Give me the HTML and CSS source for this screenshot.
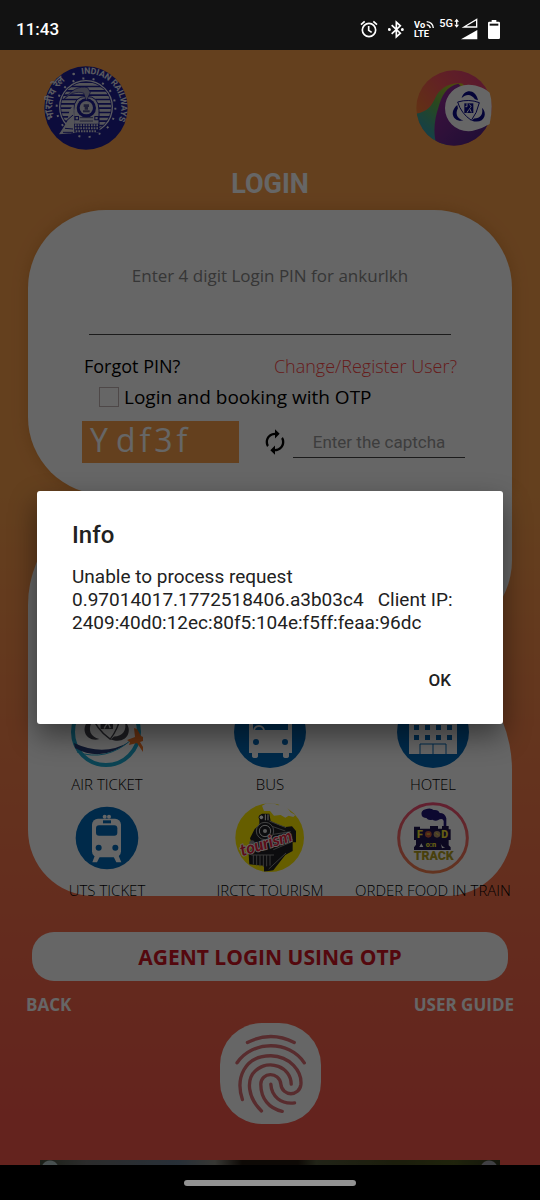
FILE: index.html
```
<!DOCTYPE html>
<html lang="en">
	<head>
		<meta charset="UTF-8">
		<meta name="viewport" content="width=device-width, initial-scale=1">
		<title>Login</title>
		<link rel="stylesheet" href="styles.css">
	</head>
	<body>
		<div class="status-bar">
			<span class="clock">11:43</span>
			<div class="status-icons">
				<!-- alarm -->
				<svg class="alarm" viewBox="0 0 54 54" fill="none" stroke="#fff" stroke-width="5">
					<circle cx="27" cy="30" r="20"/>
					<path d="M26 18v13l9 6M3 14L14 4M51 14L40 4"/>
				</svg>
				<!-- bluetooth -->
				<svg class="bluetooth" viewBox="0 0 48 56" fill="none" stroke="#fff" stroke-width="5">
					<path d="M11 15l26 24-12 11V6l12 11-26 24"/>
					<circle cx="4" cy="28" r="2" fill="#fff"/>
					<circle cx="43" cy="28" r="2" fill="#fff"/>
				</svg>
				<!-- VoLTE -->
				<svg class="volte" viewBox="0 0 60 54">
					<text x="0" y="23" class="volte-text">Vo</text>
					<text x="0" y="52" class="volte-text">LTE</text>
					<path d="M38 5c12 1 19 9 20 19M38 14c6 1 10 5 11 10" fill="none" stroke="#fff" stroke-width="4"/>
				</svg>
				<!-- 5G and signal -->
				<span class="net">5G</span>
				<svg class="signal" viewBox="45 0 72 66">
					<path d="M53 2l7 9H46zM53 29l7-9H46zM51 9h4v12h-4z" fill="#fff"/>
					<path d="M75 27L113 4v23z" fill="none" stroke="#fff" stroke-width="4"/>
					<path d="M66 64L115 36v28z" fill="#fff"/>
				</svg>
				<!-- battery -->
				<svg class="battery" viewBox="0 0 36 57">
					<path d="M11 0h14v5h7q4 0 4 4v44q0 4-4 4H4q-4 0-4-4V9q0-4 4-4h7z" fill="#fff"/>
					<path d="M5 11h26v6H5z" fill="#121212"/>
				</svg>
			</div>
		</div>

		<main class="screen">
			<header class="logos">
				<svg class="logo-ir" viewBox="133 197 252 252" role="img" aria-label="Indian Railways">
					<defs>
						<path id="ringEn" d="M246 222A101 101 0 0 1 336 392"/>
						<path id="ringHi" d="M163 355A102 102 0 0 1 210 232"/>
						<clipPath id="disc"><circle cx="259" cy="320" r="75"/></clipPath>
					</defs>
					<circle cx="259" cy="323" r="125" fill="#1e1e96"/>
					<text class="ring-text"><textPath href="#ringEn">INDIAN RAILWAYS</textPath></text>
					<text class="ring-text ring-hi"><textPath href="#ringHi">भारतीय रेल</textPath></text>
					<circle cx="222" cy="221" r="4" fill="#e6e6f0"/>
					<circle cx="259" cy="322" r="88" fill="none" stroke="#e6e6f0" stroke-width="6" stroke-dasharray="6 25"/>
					<circle cx="259" cy="320" r="79" fill="none" stroke="#e6e6f0" stroke-width="4"/>
					<path clip-path="url(#disc)" d="M180 252h160M180 265h160M180 278h160M180 291h160M180 304h160M180 317h160M180 330h160M180 343h160M180 356h160M180 369h160M180 382h160" stroke="#d2d2dc" stroke-width="8"/>
					<path d="M222 398V330q0-42 38-42t38 42v68z" fill="#d2d2dc" stroke="#1e1e96" stroke-width="3"/>
					<circle cx="260" cy="323" r="29" fill="#1e1e96"/>
					<circle cx="260" cy="322" r="20" fill="#d2d2dc"/>
					<path d="M252 312h16v8h-16zM255 320h10v8h-10zM250 330h20v6h-20z" fill="#50508c"/>
					<path d="M224 347h14v13h-14zM284 347h14v13h-14z" fill="#1e1e96"/>
					<path d="M228 350h7v7h-7zM287 350h7v7h-7z" fill="#d2d2dc"/>
					<path d="M240 352h40M240 362h40" stroke="#50508c" stroke-width="3"/>
					<path d="M222 370h76v24l-38 12-38-12z" fill="#1e1e96"/>
					<path d="M226 375h70M226 384h70M228 393h64" stroke="#d2d2dc" stroke-width="6" stroke-dasharray="5 3"/>
					<path d="M178 402l24-38 8-36 12-14 2 84z" fill="#d2d2dc"/>
					<path d="M202 360l18-16M196 384l24 2M190 396h30" stroke="#1e1e96" stroke-width="3"/>
					<path d="M192 298c22-30 46-42 72-36l8 14-12 26-8-24c-22-6-42 2-60 20z" fill="#a0a0be" stroke="#1e1e96" stroke-width="2"/>
				</svg>
				<svg class="logo-irctc" viewBox="438 209 228 228" role="img" aria-label="IRCTC">
					<defs>
						<linearGradient id="warm" x1="0" y1=".6" x2=".8" y2="0">
							<stop offset="0" stop-color="#f5822d"/><stop offset=".5" stop-color="#f5555a"/><stop offset="1" stop-color="#dc3c78"/>
						</linearGradient>
						<linearGradient id="cool" x1=".8" y1="0" x2=".1" y2="1">
							<stop offset="0" stop-color="#c8be1e"/><stop offset=".4" stop-color="#64b450"/><stop offset="1" stop-color="#1e96e6"/>
						</linearGradient>
						<linearGradient id="violet" x1="0" y1="0" x2="1" y2="1">
							<stop offset="0" stop-color="#a02d9b"/><stop offset="1" stop-color="#412382"/>
						</linearGradient>
						<clipPath id="ball"><circle cx="552" cy="323" r="113"/></clipPath>
						<!-- three blades round the monogram -->
						<g id="wheel">
							<path id="blade" d="M-22-32C-16-58 20-62 27-25L18-28C8-44-8-46-22-32z"/>
							<use href="#blade" transform="rotate(120)"/>
							<use href="#blade" transform="rotate(240)"/>
							<path d="M-34-20Q0-30 31-18Q24 14 7 35Q-24 14-34-20z" fill="none" stroke="currentColor" stroke-width="3"/>
							<path d="M-14-16h27v29h-27z"/>
							<path d="M-6-16v10h-5M1-12q10 4 1 11l5 12M-6 12q3-8 7-10" fill="none" stroke="#fff" stroke-width="3"/>
						</g>
					</defs>
					<g clip-path="url(#ball)">
						<path d="M430 200h250v250H430z" fill="url(#warm)"/>
						<path d="M438 340c38-8 46-24 58-48 12-26 42-48 82-42l20 30-70 170h-90z" fill="url(#cool)"/>
						<path d="M565 250c-36 8-50 36-60 72-12 34-18 84-2 120h170v-90z" fill="url(#violet)"/>
					</g>
					<path d="M595 253c30 0 54 14 64 24q12 36 0 94c-8 4-34 20-64 22a70 70 0 1 1 0-140z" fill="#fff"/>
					<use href="#wheel" x="597" y="325" fill="#0a0a8c" color="#0a0a8c"/>
				</svg>
			</header>
			<h1 class="title">LOGIN</h1>

			<form class="panel panel-login">
				<div class="pin">
					<label for="pin">Enter 4 digit Login PIN for ankurlkh</label>
					<input id="pin" type="password" maxlength="4">
				</div>
				<div class="links">
					<a href="#" class="forgot">Forgot PIN?</a>
					<a href="#" class="change">Change/Register User?</a>
				</div>
				<div class="otp">
					<input type="checkbox" id="otp">
					<label for="otp">Login and booking with OTP</label>
				</div>
				<div class="captcha">
					<div class="captcha-code"><span>Y</span><span>d</span><span>f</span><span>3</span><span>f</span></div>
					<button type="button" class="refresh" aria-label="Refresh captcha">
						<svg viewBox="0 0 24 24"><path d="M12 6v3l4-4-4-4v3c-4.420 0-8 3.580-8 8 0 1.570.46 3.030 1.240 4.260L6.700 14.800C6.250 13.970 6 13.010 6 12c0-3.310 2.690-6 6-6zm6.760 1.740L17.300 9.200c.44.84.7 1.790.7 2.800 0 3.310-2.690 6-6 6v-3l-4 4 4 4v-3c4.420 0 8-3.580 8-8 0-1.570-.46-3.030-1.240-4.260z"/></svg>
					</button>
					<input type="text" class="captcha-input" placeholder="Enter the captcha" aria-label="Captcha">
				</div>
			</form>

			<div class="panel panel-middle"></div>

			<nav class="panel panel-services">
				<a href="#" class="service">
					<svg viewBox="0 0 72 72">
						<circle cx="35" cy="36" r="33" fill="none" stroke="#1eaad2" stroke-width="4"/>
						<use href="#wheel" transform="translate(36 27) scale(.46)" fill="#464650" color="#464650"/>
						<path d="M4 52Q31 67 58 46Q33 61 3 47z" fill="#283c78"/>
						<path d="M6 56Q35 66 60 44" fill="none" stroke="#1eaad2" stroke-width="1"/>
						<path d="M56 44l8-3-1-9 3 1 4 7 2 1v4l-3 1 3 5v5l-6-9-8 2 1-3z" fill="#fa7828"/>
					</svg>
					<span>AIR TICKET</span>
				</a>
				<a href="#" class="service">
					<svg viewBox="0 0 72 72">
						<circle cx="36" cy="36" r="36" fill="#0069b9"/>
						<path d="M20 15h32q6 0 6 6v36h-3v3q0 2-3 2t-3-2v-3H24v3q0 2-3 2t-3-2v-3h-3V21q0-6 5-6z" fill="#fff"/>
						<path d="M19 20h35v14H19z" fill="#0069b9"/>
						<path d="M20 35a5 5 0 0 1 10 0" fill="none" stroke="#fff" stroke-width="2"/>
						<circle cx="22" cy="46" r="3" fill="#0069b9"/>
						<circle cx="51" cy="46" r="3" fill="#0069b9"/>
					</svg>
					<span>BUS</span>
				</a>
				<a href="#" class="service">
					<svg viewBox="0 0 72 72">
						<circle cx="36" cy="36" r="36" fill="#0069b9"/>
						<path d="M12 10h48v48H12z" fill="#fff"/>
						<path d="M17 18h5v5h-5zM28 18h5v5h-5zM39 18h5v5h-5zM50 18h5v5h-5zM17 29h5v5h-5zM28 29h5v5h-5zM39 29h5v5h-5zM50 29h5v5h-5zM17 39h5v5h-5zM28 39h5v5h-5zM39 39h5v5h-5zM50 39h5v5h-5z" fill="#0069b9"/>
						<path d="M23 58V48h26v10M36 48v10" fill="none" stroke="#0069b9" stroke-width="1"/>
					</svg>
					<span>HOTEL</span>
				</a>
				<a href="#" class="service">
					<svg viewBox="156 305 216 216">
						<circle cx="264" cy="413" r="94" fill="#0069b9"/>
						<rect x="219" y="355" width="87" height="116" rx="18" fill="#fff"/>
						<circle cx="257" cy="349" r="6" fill="#fff"/>
						<circle cx="270" cy="349" r="6" fill="#fff"/>
						<path d="M252 360h24v9h-24z" fill="#0069b9"/>
						<rect x="231" y="375" width="64" height="31" rx="9" fill="#0069b9"/>
						<circle cx="239" cy="442" r="9" fill="#0069b9"/>
						<circle cx="289" cy="442" r="9" fill="#0069b9"/>
						<path d="M229 462h17l-12 24h-14zM280 462h17l10 24h-15z" fill="#fff"/>
					</svg>
					<span>UTS TICKET</span>
				</a>
				<a href="#" class="service">
					<svg viewBox="44 243 216 216">
						<defs><clipPath id="sun"><circle cx="151" cy="350" r="103"/></clipPath></defs>
						<circle cx="151" cy="350" r="103" fill="#ffeb00"/>
						<path d="M128 254l14-7 20 0 14 6 12-2 16 9 10 14 14 8-6 6-14-4-10 6-14-8-20 2-12-14-18 0z" fill="#fff"/>
						<g clip-path="url(#sun)">
							<path d="M120 284l8-6h22l4 22 24 12 20 6 20-2 12 14v34h-10v26l-22 12-36 46-28 4v-18l-44-4-2-30 12-26-8-22 14-28 14-12z" fill="#1e1e23"/>
							<path d="M158 316l40 14M162 340l52-8M164 360l56-4M162 386l52-22M148 444l52-48M150 300l50 20" stroke="#8c8c8c" stroke-width="3"/>
						</g>
						<circle cx="137" cy="330" r="26" fill="#1e1e23" stroke="#aaa" stroke-width="3"/>
						<circle cx="137" cy="330" r="17" fill="none" stroke="#ddd" stroke-width="3"/>
						<circle cx="137" cy="330" r="6" fill="#ddd"/>
						<circle cx="126" cy="289" r="7" fill="#fff" stroke="#1e1e23" stroke-width="3"/>
						<path d="M146 280v18M138 280v18" stroke="#fff" stroke-width="3"/>
						<circle cx="98" cy="366" r="8" fill="#8c8c8c"/>
						<path d="M102 402v28M112 402v32M122 402v34M132 402v36M142 402v34M152 402v32M96 402h68" stroke="#8c8c8c" stroke-width="3"/>
						<text x="68" y="406" transform="rotate(-17 68 406)" class="tourism-text">tourism</text>
					</svg>
					<span>IRCTC TOURISM</span>
				</a>
				<a href="#" class="service">
					<svg viewBox="381 304 216 216">
						<defs>
							<linearGradient id="ringFood" x1="0" y1="0" x2="0" y2="1">
								<stop offset="0" stop-color="#f55078"/><stop offset="1" stop-color="#f58250"/>
							</linearGradient>
						</defs>
						<circle cx="489" cy="412" r="103" fill="none" stroke="url(#ringFood)" stroke-width="9"/>
						<path d="M455 344q-4-14 12-18 14-6 24 2 14-2 18 9 16 0 20 16v24h-8v-16q-2-8-12-5-10 8-22 1-12 4-18-5-11 0-14-8z" fill="#1e1478"/>
						<path d="M432 378h18v6h30v-8h24v8h12v-8h20v10h6v32h-6v16l6 6v8H432v-8l6-8v-14h-6z" fill="#1e1450"/>
						<text x="441" y="412" class="food-text">F</text>
						<circle cx="475" cy="401" r="10" fill="#c85a3c"/>
						<circle cx="501" cy="401" r="10" fill="#b4966e"/>
						<path d="M470 400h10M498 396l8 8" stroke="#fae632" stroke-width="3"/>
						<text x="514" y="412" class="food-text">D</text>
						<text x="467" y="440" class="food-text food-on">o:n</text>
						<path d="M448 439l6-11 6 11zM512 428q4 12 14 12l-10 3z" fill="#fff"/>
						<text x="431" y="479" class="track-text">TRACK</text>
					</svg>
					<span>ORDER FOOD IN TRAIN</span>
				</a>
			</nav>

			<button type="button" class="agent">AGENT LOGIN USING OTP</button>
			<div class="footer-links">
				<a href="#">BACK</a>
				<a href="#">USER GUIDE</a>
			</div>
			<button type="button" class="finger" aria-label="Login with fingerprint">
				<svg viewBox="58 39 302 302" fill="none" stroke="#dc6e73" stroke-width="10" stroke-linecap="round">
					<path d="M140 97Q210 62 280 97"/>
					<path d="M109 158C155 90 265 90 310 158"/>
					<path d="M125 268C104 205 130 137 210 137C268 138 303 185 300 222C296 260 244 260 240 222C236 183 180 185 180 222C180 265 205 295 244 303"/>
					<path d="M182 302C140 262 136 207 164 182C205 145 270 170 271 222"/>
					<path d="M210 222C212 258 240 283 281 278"/>
				</svg>
			</button>
			<div class="ad"></div>

			<div class="scrim">
				<div class="dialog" role="alertdialog" aria-labelledby="dialogTitle">
					<h2 id="dialogTitle">Info</h2>
					<p>Unable to process request<br>0.97014017.1772518406.a3b03c4 &nbsp; Client IP:<br>2409:40d0:12ec:80f5:104e:f5ff:feaa:96dc</p>
					<div class="dialog-actions">
						<button type="button">OK</button>
					</div>
				</div>
			</div>
		</main>

		<div class="nav-bar"><div class="pill"></div></div>
	</body>
</html>
```
FILE: styles.css
```
* {
	box-sizing: border-box;
}
body {
	margin: 0;
	min-height: 100vh;
	display: flex;
	flex-direction: column;
	background: #000;
	font-family: "Open Sans", "Noto Sans", sans-serif;
}
h1, h2, p {
	margin: 0;
}
a {
	color: inherit;
	text-decoration: none;
}
button, input {
	font: inherit;
	border: 0;
	padding: 0;
	background: none;
}
svg {
	display: block;
}

/* status bar */
.status-bar {
	display: flex;
	justify-content: space-between;
	align-items: center;
	height: 50px;
	padding: 8px 40px 0 16px;
	background: #121212;
	color: #fff;
}
.clock {
	font: 500 17px/24px Roboto, sans-serif;
}
.status-icons {
	display: flex;
	align-items: center;
	gap: 10px;
}
.alarm {
	width: 18px;
	height: 18px;
}
.bluetooth {
	width: 16px;
	height: 19px;
}
.volte {
	width: 20px;
	height: 18px;
}
.net {
	align-self: flex-start;
	margin: 0 -9px 0 -5px;
	font: 500 11px/12px Roboto, sans-serif;
}
.signal {
	width: 24px;
	height: 22px;
}
.battery {
	width: 12px;
	height: 19px;
}
.volte-text {
	font: 700 28px Roboto, sans-serif;
	fill: #fff;
}

/* login screen */
.screen {
	position: relative;
	flex: 1;
	display: flex;
	flex-direction: column;
	background: linear-gradient(#faa04d 0, #faa04d 40%, #fa584d 96%);
}
.logos {
	display: flex;
	justify-content: space-between;
	align-items: center;
	padding: 16px 48px 0 44px;
}
.logo-ir {
	width: 84px;
	height: 84px;
}
.logo-irctc {
	width: 76px;
	height: 76px;
}
.ring-text {
	font: 700 26px Roboto, sans-serif;
	fill: #e6e6f0;
}
.ring-hi {
	font-size: 30px;
}
.title {
	margin: 18px 0 10px;
	font: 700 27px/32px Roboto, sans-serif;
	text-align: center;
	color: #fff;
}
.panel {
	margin: 0 28px;
	background: #fff;
}
.panel-login {
	padding: 54px 0 32px;
	border-radius: 78px 78px 0 78px;
	box-shadow: 0 0 16px rgba(160, 80, 0, .3);
}
.panel-middle {
	height: 145px;
	border-radius: 110px 0 80px 0;
}
.panel-services {
	display: grid;
	grid-template-columns: repeat(3, 163px);
	justify-content: center;
	row-gap: 8px;
	height: 256px;
	padding-top: 56px;
	border-radius: 0 130px 66px 66px;
}
.pin {
	padding: 0 61px;
	text-align: center;
	font-size: 17px;
	line-height: 24px;
	color: #888;
}
.pin label {
	display: block;
}
.pin input {
	display: block;
	width: 100%;
	height: 47px;
	border-bottom: 1px solid #444;
	text-align: center;
}
.links {
	display: flex;
	justify-content: space-between;
	margin-top: 19px;
	padding: 0 55px 0 56px;
	font-size: 18px;
	line-height: 24px;
}
.change {
	font-weight: 300;
	color: #ff4646;
}
.otp {
	display: flex;
	align-items: center;
	gap: 5px;
	margin-top: 7px;
	padding-left: 71px;
	font-size: 19px;
	line-height: 24px;
}
.otp input {
	appearance: none;
	width: 20px;
	height: 20px;
	margin: 0;
	border: 1px solid #c3b4b4;
}
.captcha {
	display: flex;
	align-items: center;
	margin-top: 12px;
	padding: 0 47px 0 54px;
}
.captcha-code {
	display: flex;
	gap: 4px;
	width: 157px;
	height: 42px;
	padding-left: 8px;
	background: #faa04d;
	color: #fff;
	font-size: 32px;
	line-height: 38px;
}
.captcha-code span:first-child {
	margin-right: 4px;
}
.refresh {
	margin: 0 4px 0 22px;
}
.refresh svg {
	width: 28px;
	height: 28px;
}
.captcha-input {
	flex: 1;
	min-width: 0;
	height: 32px;
	border-bottom: 1px solid #444;
	font: 17px Roboto, sans-serif;
	text-align: center;
}
.captcha-input::placeholder {
	color: #999;
	opacity: 1;
}
.service {
	display: flex;
	flex-direction: column;
	align-items: center;
	gap: 6px;
	font-size: 15px;
	font-weight: 300;
	line-height: 20px;
	color: #000;
	white-space: nowrap;
}
.service svg {
	width: 72px;
	height: 72px;
}
.tourism-text {
	font: italic 700 50px Lato, sans-serif;
	fill: #e61e3c;
	stroke: #fff;
	stroke-width: 5px;
	paint-order: stroke;
}
.food-text {
	font: 900 32px Roboto, sans-serif;
	fill: #fae632;
}
.food-on {
	font-size: 22px;
}
.track-text {
	font: 900 37px Roboto, sans-serif;
	fill: #b4a01e;
}
.agent {
	height: 49px;
	margin: 36px 32px 12px;
	border-radius: 22px;
	background: #fff;
	color: #d21423;
	font-size: 21px;
	font-weight: 700;
}
.footer-links {
	display: flex;
	justify-content: space-between;
	padding: 0 26px;
	font-size: 17px;
	font-weight: 700;
	line-height: 24px;
	color: #fff;
}
.finger {
	align-self: center;
	width: 101px;
	height: 101px;
	margin: 6px 0 36px;
	border-radius: 42px;
	background: #fff;
}
.ad {
	height: 5px;
	margin: auto 40px 0;
	background:
		radial-gradient(circle at 10px 9px, #b4c8c8 0 8px, transparent 9px),
		radial-gradient(circle at calc(100% - 11px) 9px, #a0a0aa 0 8px, transparent 9px),
		linear-gradient(90deg, #46503c, #6e6e6e 10%, #64788c 30%, #8c8c82 38%, #23190f 44%, #23190f 56%, #555a3c 60%, #464b1e 78%, #505a1e 90%, #32371e);
}

/* dialog */
.scrim {
	position: absolute;
	inset: 0;
	display: flex;
	align-items: center;
	padding: 0 37px;
	background: rgba(0, 0, 0, .6);
}
.dialog {
	flex: 1;
	padding: 28px 35px 26px;
	border-radius: 3px;
	background: #fff;
	box-shadow: 0 12px 28px rgba(0, 0, 0, .45);
	font-family: Roboto, sans-serif;
	color: #212121;
}
.dialog h2 {
	font-size: 24px;
	font-weight: 500;
	line-height: 32px;
}
.dialog p {
	margin-top: 14px;
	font-size: 19px;
	line-height: 23px;
}
.dialog-actions {
	display: flex;
	justify-content: flex-end;
	margin-top: 28px;
}
.dialog-actions button {
	padding: 0 17px;
	font-size: 17px;
	font-weight: 500;
	line-height: 36px;
	color: #212121;
}

/* gesture bar */
.nav-bar {
	display: flex;
	align-items: center;
	justify-content: center;
	height: 35px;
	background: #000;
}
.pill {
	width: 32%;
	height: 6px;
	border-radius: 3px;
	background: #929292;
}
```
